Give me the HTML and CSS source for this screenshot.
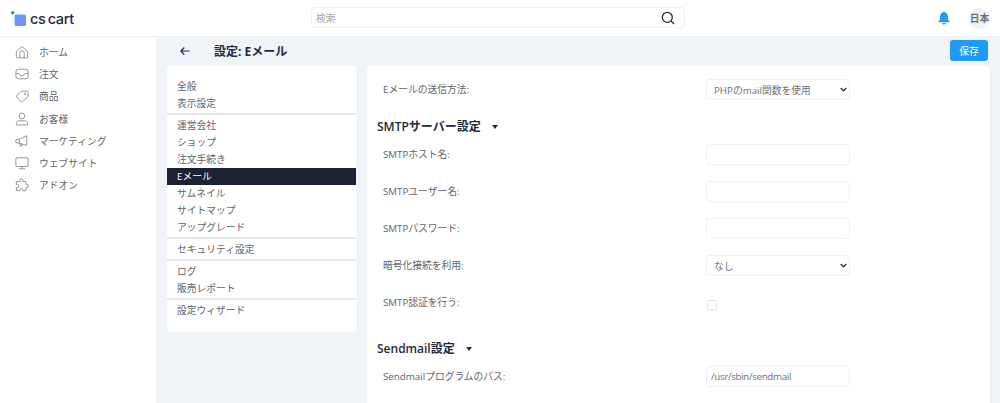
FILE: index.html
```html
<!DOCTYPE html>
<html lang="ja">
<head>
<meta charset="utf-8">
<title>設定: Eメール</title>
<link rel="stylesheet" href="styles.css">
</head>
<body>
<header class="topbar">
  <div class="logo">
    <svg class="logo-mark" width="15" height="15" viewBox="0 0 15 15"><defs><linearGradient id="lg" x1="0" y1="0" x2="1" y2="1"><stop offset="0" stop-color="#55a4fa"/><stop offset="1" stop-color="#8c88fb"/></linearGradient></defs><circle cx="1.700" cy="1.700" r="1.700" fill="#3f78f6"/><rect x="3.500" y="3.500" width="11.500" height="11.500" rx="1.500" fill="url(#lg)"/></svg>
    <span class="logo-text">cs cart</span>
  </div>
  <div class="search">
    <span class="search-text">検索</span>
    <svg width="14" height="14" viewBox="0 0 14 14" fill="none" stroke="#222b3a" stroke-width="1.300"><circle cx="6.300" cy="6.300" r="5"/><path d="M10 10l3 3"/></svg>
  </div>
  <div class="top-right">
    <svg width="12" height="14" viewBox="0 0 12 14" fill="#1f9bf5"><path d="M6 0.500c.7 0 1 .4 1 1 2 .5 3 2.200 3 4.200v2.800l1.500 2v.8H.5v-.8l1.500-2V5.700c0-2 1-3.700 3-4.200 0-.6.3-1 1-1z"/><path d="M4.300 12h3.400c0 1-.8 1.600-1.700 1.600s-1.700-.6-1.700-1.600z"/></svg>
    <span class="avatar">日本</span>
  </div>
</header>
<div class="shell">
  <nav class="sidenav">
    <a class="nav-item"><svg class="nav-icon" viewBox="0 0 16 16"><path d="M1.500 7.500L8 1.800l6.500 5.700v6.200a1 1 0 0 1-1 1h-11a1 1 0 0 1-1-1z"/><path d="M5.500 14.700V9a2.500 2.500 0 0 1 5 0v5.700"/></svg>ホーム</a>
    <a class="nav-item"><svg class="nav-icon" viewBox="0 0 16 16"><rect x="1" y="2.500" width="14" height="11" rx="3"/><path d="M1 7.500h3.500c.5 1.500 1.800 2.300 3.500 2.300s3-.8 3.500-2.300H15"/></svg>注文</a>
    <a class="nav-item"><svg class="nav-icon" viewBox="0 0 16 16"><path d="M1 8.500L7.500 2.500h6.500a1 1 0 0 1 1 1v5L8.500 14.500a1 1 0 0 1-1.400 0z"/><circle cx="11.500" cy="5.500" r=".8"/></svg>商品</a>
    <a class="nav-item"><svg class="nav-icon" viewBox="0 0 16 16"><circle cx="8" cy="4.500" r="3.300"/><path d="M1.500 14.800v-1.300c0-2 1.500-3.500 3.500-3.500h6c2 0 3.500 1.500 3.500 3.500v1.300z"/></svg>お客様</a>
    <a class="nav-item"><svg class="nav-icon" viewBox="0 0 16 16"><path d="M1 6.500l4-.5 8.500-4v11L5 10.500 1 10z"/><path d="M5 6v4.500M5.500 10.800l.7 3h1.800l-.6-2.600"/></svg>マーケティング</a>
    <a class="nav-item"><svg class="nav-icon" viewBox="0 0 16 16"><rect x="1" y="2" width="14" height="10" rx="1.200"/><path d="M8 12v2.500M4.500 14.500h7"/></svg>ウェブサイト</a>
    <a class="nav-item"><svg class="nav-icon" viewBox="0 0 16 16"><path d="M6 1.500a1.700 1.700 0 0 1 3 1.200V4h3.500v3.300h1a1.800 1.800 0 0 1 0 3.600h-1v3.600H9v-1a1.800 1.800 0 0 0-3.500 0v1H1.500V11h1a1.800 1.800 0 0 0 0-3.600h-1V4H6z"/></svg>アドオン</a>
  </nav>
  <main class="content">
    <div class="titlebar">
      <svg class="back" width="10" height="10" viewBox="0 0 10 10" fill="none" stroke="#1b2436" stroke-width="1.100"><path d="M9.500 5H.8M4.300 1.500L.8 5l3.500 3.500"/></svg>
      <h1 class="page-title">設定: Eメール</h1>
      <button class="save">保存</button>
    </div>
    <div class="columns">
      <aside class="menu-card">
        <ul class="menu-group"><li>全般</li><li>表示設定</li></ul>
        <ul class="menu-group"><li>運営会社</li><li>ショップ</li><li>注文手続き</li><li class="active">Eメール</li><li>サムネイル</li><li>サイトマップ</li><li>アップグレード</li></ul>
        <ul class="menu-group"><li>セキュリティ設定</li></ul>
        <ul class="menu-group"><li>ログ</li><li>販売レポート</li></ul>
        <ul class="menu-group"><li>設定ウィザード</li></ul>
      </aside>
      <section class="form-card">
        <div class="row first"><span class="label">Eメールの送信方法:</span>
          <div class="select"><span>PHPのmail関数を使用</span><svg class="chev" width="7" height="5" viewBox="0 0 7 5" fill="none" stroke="#333" stroke-width="1.300"><path d="M.7 1l2.800 2.800L6.300 1"/></svg></div></div>
        <h2 class="section">SMTPサーバー設定<i class="caret"></i></h2>
        <div class="row"><span class="label">SMTPホスト名:</span><div class="input"></div></div>
        <div class="row"><span class="label">SMTPユーザー名:</span><div class="input"></div></div>
        <div class="row"><span class="label">SMTPパスワード:</span><div class="input"></div></div>
        <div class="row"><span class="label">暗号化接続を利用:</span>
          <div class="select"><span>なし</span><svg class="chev" width="7" height="5" viewBox="0 0 7 5" fill="none" stroke="#333" stroke-width="1.300"><path d="M.7 1l2.800 2.800L6.300 1"/></svg></div></div>
        <div class="row"><span class="label">SMTP認証を行う:</span><div class="check"></div></div>
        <h2 class="section second">Sendmail設定<i class="caret"></i></h2>
        <div class="row"><span class="label">Sendmailプログラムのパス:</span><div class="input">/usr/sbin/sendmail</div></div>
      </section>
    </div>
  </main>
</div>
</body>
</html>
```
FILE: styles.css
```css
* { box-sizing: border-box; }
html, body { margin: 0; height: 403px; overflow: hidden; }
body {
  font-family: "Open Sans", "Noto Sans CJK JP", sans-serif;
  font-size: 9.750px;
  color: #5f646d;
  background: #f0f3f8;
}
.topbar {
  height: 37px;
  background: #fff;
  border-bottom: 1px solid #eceff4;
  display: grid;
  grid-template-columns: 311px 374px 1fr;
  align-items: center;
}
.logo { display: flex; align-items: center; padding-left: 11px; gap: 4px; }
.logo-mark { display: block; }
.logo-text {
  font-family: Inter, sans-serif;
  font-size: 14.500px;
  font-weight: 500;
  color: #232b3b;
  letter-spacing: -0.300px;
  word-spacing: -1.500px;
}
.search {
  height: 21px;
  margin-top: -1px;
  border: 1px solid #eef0f5;
  border-radius: 4px;
  display: flex;
  align-items: center;
  justify-content: space-between;
  padding: 0 9px 0 4px;
}
.search-text { color: #a4a7ad; }
.top-right { display: flex; align-items: center; justify-content: flex-end; gap: 19px; padding-right: 10px; }
.avatar {
  width: 21px; height: 21px; border-radius: 50%;
  background: #f0f2f6;
  display: flex; align-items: center; justify-content: center;
  font-weight: 700; color: #6a6e77;
}
.shell { display: flex; height: 366px; }
.sidenav {
  width: 156px;
  flex: none;
  background: #fff;
  padding-top: 4px;
}
.nav-item {
  display: flex;
  align-items: center;
  height: 22.200px;
  padding-left: 15px;
}
.nav-icon {
  width: 14px; height: 14px;
  margin-right: 10px;
  fill: none;
  stroke: #858a93;
  stroke-width: 1;
  flex: none;
}
.content { flex: 1; min-width: 0; padding: 0 10px 0 11px; }
.titlebar {
  height: 29px;
  display: flex;
  align-items: center;
  padding: 0 0 2px 13px;
}
.back { display: block; }
.page-title {
  margin: 0 0 0 24px;
  font-size: 12px;
  font-weight: 700;
  color: #232b3b;
  flex: 1;
}
.save {
  width: 38px; height: 21px;
  margin-right: 2px;
  border: 0;
  border-radius: 3px;
  background: #1f9bf5;
  color: #fff;
  font: inherit;
  padding: 0;
}
.columns { display: flex; gap: 11px; align-items: flex-start; }
.menu-card {
  width: 189px;
  height: 266px;
  flex: none;
  background: #fff;
  border-radius: 4px;
  padding-top: 12px;
}
.menu-group {
  list-style: none;
  margin: 0 0 2px;
  padding: 0 0 1px;
  border-bottom: 2px solid #e6e7e9;
}
.menu-group:last-child { border-bottom: 0; }
.menu-group li {
  height: 17px;
  line-height: 18px;
  padding-left: 10px;
}
.menu-group li.active {
  background: #1b2236;
  color: #fff;
}
.form-card {
  flex: 1;
  height: 337px;
  background: #fff;
  border-radius: 4px 4px 0 0;
  padding: 13px 0 0 10px;
}
.row {
  display: flex;
  align-items: center;
  height: 21px;
  margin-bottom: 16px;
}
.row.first { margin-bottom: 0; }
.label { width: 329px; padding: 0 0 2px 6px; flex: none; }
.select, .input {
  width: 144px;
  height: 21px;
  border: 1px solid #eef0f6;
  border-radius: 4px;
  background: #fff;
  color: #6c7078;
  display: flex;
  align-items: center;
}
.select { justify-content: space-between; padding: 0 2px 0 7px; }
.input { padding: 0 4px; letter-spacing: -0.320px; }
.check {
  width: 10px; height: 10px;
  margin: 4px 0 0 1px;
  border: 1px solid #dfe3ec;
  border-radius: 2px;
}
.section {
  display: flex;
  align-items: center;
  margin: 18px 0 10px;
  height: 16px;
  font-size: 12px;
  font-weight: 600;
  color: #232b3b;
}
.section.second { margin: 27px 0 10px; }
.caret {
  margin-left: 11px;
  margin-top: 1px;
  border-left: 3.500px solid transparent;
  border-right: 3.500px solid transparent;
  border-top: 4px solid #232b3b;
}
```
